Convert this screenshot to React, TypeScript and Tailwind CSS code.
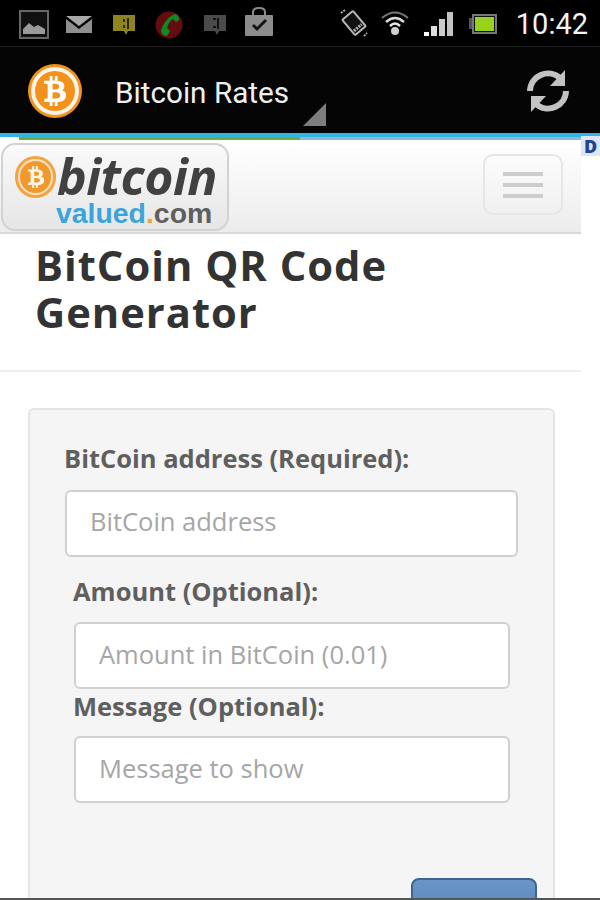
import { FaBtc } from "react-icons/fa";

function StatusIcons() {
    return (
        <div className="mt-[3px] flex items-center">
            {/* picture */}
            <svg width="32" height="32" viewBox="0 0 32 32" className="ml-[18px]">
                <rect x="2" y="2" width="28" height="27" fill="#111" stroke="#666" strokeWidth="2" />
                <path d="M5 25 L5 20 L11 14 L16 18 L20 16 L27 20 L27 25 Z" fill="#9a9a9a" />
            </svg>
            {/* mail */}
            <svg width="28" height="20" viewBox="0 0 28 20" className="ml-[15px]">
                <path d="M1 1 H27 L14 11 Z" fill="#a8a8a8" />
                <path d="M1 4 L14 14 L27 4 V18 H1 Z" fill="#8f8f8f" />
            </svg>
            {/* sms, yellow */}
            <svg width="24" height="22" viewBox="0 0 24 22" className="ml-[19px]">
                <path d="M1 1 H23 V17 H16 L14 21 L12 17 H1 Z" fill="#8f8520" />
                <path d="M12 5 v3 M12 11 v3 M16 4 v11" stroke="#2a2808" strokeWidth="2" />
            </svg>
            {/* missed call */}
            <svg width="28" height="28" viewBox="0 0 28 28" className="ml-[19px]">
                <circle cx="14" cy="14" r="13.5" fill="#640c10" />
                <path d="M20 3 C22 3 25 7 24 9 L21 11 L18 8 C15 10 13 13 12 17 L15 20 L12 25 C8 25 6 22 6 20 C8 12 13 6 20 3 Z" fill="#0d8a22" />
            </svg>
            {/* sms, grey */}
            <svg width="24" height="22" viewBox="0 0 24 22" className="ml-[20px]">
                <path d="M1 1 H23 V17 H16 L14 21 L12 17 H1 Z" fill="#4a4a4a" />
                <path d="M10 5 h3 M10 13 h3 M15 4 v11" stroke="#111" strokeWidth="2" />
            </svg>
            {/* market bag */}
            <svg width="30" height="30" viewBox="0 0 30 30" className="-mt-[6px] ml-[17px]">
                <path d="M9 9 V5 Q9 1 15 1 Q21 1 21 5 V9" fill="none" stroke="#8a8a8a" strokeWidth="2" />
                <rect x="1" y="8" width="28" height="21" rx="1" fill="#8c8c8c" />
                <path d="M9 18 L13 22 L22 13" fill="none" stroke="#151515" strokeWidth="3" />
            </svg>
        </div>
    );
}

function SystemIcons() {
    return (
        <div className="flex items-center">
            {/* rotate lock */}
            <svg width="28" height="28" viewBox="0 0 28 28">
                <g transform="rotate(-40 14 14)">
                    <rect x="7" y="4" width="14" height="20" rx="1" fill="#111" stroke="#b8b8b8" strokeWidth="2" />
                    <path d="M9 20 h10" stroke="#b8b8b8" strokeWidth="3" strokeDasharray="2 1" />
                </g>
                <path d="M1 4 L5 1 M24 27 L27 24" stroke="#a8a8a8" strokeWidth="2" strokeDasharray="2 1" />
            </svg>
            {/* wifi */}
            <svg width="28" height="26" viewBox="0 0 28 26" className="ml-[13px]">
                <path d="M1 8 Q14 -3 27 8" fill="none" stroke="#777" strokeWidth="2" />
                <path d="M5 12 Q14 4 23 12" fill="none" stroke="#d8d8d8" strokeWidth="2.5" />
                <path d="M9 16 Q14 11 19 16" fill="none" stroke="#e8e8e8" strokeWidth="2.5" />
                <circle cx="14" cy="21" r="4" fill="#d0d0d0" />
            </svg>
            {/* signal */}
            <div className="ml-[15px] mt-[2px] flex h-6 items-end gap-[2px]">
                <div className="h-[4px] w-[5px] bg-white" />
                <div className="h-[10px] w-[6px] bg-[#dddddd]" />
                <div className="h-[17px] w-[6px] bg-[#cccccc]" />
                <div className="h-6 w-[6px] bg-[#c4c4c4]" />
            </div>
            {/* battery */}
            <div className="ml-[16px] mt-[1px] flex items-center">
                <div className="h-[11px] w-[3px] bg-[#555555]" />
                <div className="flex h-[20px] w-[25px] items-center border-2 border-[#777777] bg-[#111111] p-[1px]">
                    <div className="h-full w-full bg-[#98d31c]" />
                </div>
            </div>
            <span className="ml-[19px] mt-[2px] font-['Roboto',sans-serif] text-[29px] leading-none text-[#f2f2f2]">10:42</span>
        </div>
    );
}

function RefreshIcon() {
    return (
        <svg width="42" height="44" viewBox="0 0 42 44" className="ml-auto mt-[2px]">
            <path d="M3 22 A18 18 0 0 1 33 9" fill="none" stroke="#c2c2c2" strokeWidth="6" />
            <path d="M38 1 V17 H23 Z" fill="#c2c2c2" />
            <path d="M39 22 A18 18 0 0 1 9 35" fill="none" stroke="#c2c2c2" strokeWidth="6" />
            <path d="M4 43 V27 H19 Z" fill="#c2c2c2" />
        </svg>
    );
}

function Logo() {
    return (
        <div className="flex h-[88px] w-[228px] flex-col rounded-[14px] border-2 border-[#d2d2d2] bg-gradient-to-b from-[#fafafa] to-[#e6e6e6] pl-[12px] pt-[10px]">
            <div className="flex items-center">
                <div className="flex h-[42px] w-[41px] items-center justify-center rounded-full bg-[#f3a33f] p-[3px]">
                    <div className="flex h-full w-full items-center justify-center rounded-full bg-[#fbe3c4] p-[2px]">
                        <div className="flex h-full w-full items-center justify-center rounded-full bg-[#f2992e]">
                            <FaBtc className="text-[22px] text-[#fff5e6]" />
                        </div>
                    </div>
                </div>
                <span className="ml-[1px] font-['Open_Sans',sans-serif] text-[50px] font-bold italic leading-[43px] tracking-[-0.5px] text-[#414141]">bitcoin</span>
            </div>
            <div className="ml-[41px] mt-[3px] font-['Liberation_Sans',sans-serif] text-[28.4px] font-bold leading-[24px]">
                <span className="text-[#3ba3dc]">valued</span>
                <span className="text-[#f2a13a]">.</span>
                <span className="text-[#5f5f5f]">com</span>
            </div>
        </div>
    );
}

function Field({ label, placeholder, labelClass, inputClass }: { label: string; placeholder: string; labelClass: string; inputClass: string }) {
    return (
        <div>
            <div className={`text-[25.5px] font-bold leading-[36px] text-[#5f5f5f] ${labelClass}`}>{label}</div>
            <div className={`flex items-center rounded-[6px] border-2 border-[#d0d0d0] bg-white pl-[23px] text-[25.5px] text-[#a6a6a6] ${inputClass}`}>
                {placeholder}
            </div>
        </div>
    );
}

export default function App() {
    return (
        <div className="flex h-[900px] w-[600px] flex-col overflow-hidden bg-white font-['Open_Sans',sans-serif]">
            <div className="flex h-[47px] shrink-0 items-center justify-between border-b border-[#1c1c1c] bg-black pr-[12px]">
                <StatusIcons />
                <SystemIcons />
            </div>
            <div className="flex h-[86px] shrink-0 items-center bg-[#050505] pl-[28px] pr-[31px]">
                <div className="mt-[2px] flex h-[54px] w-[54px] items-center justify-center rounded-full bg-[#f2921d] p-[3px]">
                    <div className="flex h-full w-full items-center justify-center rounded-full bg-[#fff4e6] p-[4px]">
                        <div className="flex h-full w-full items-center justify-center rounded-full bg-[#f2921d]">
                            <FaBtc className="text-[30px] text-white" />
                        </div>
                    </div>
                </div>
                <span className="ml-[33px] mt-[6px] font-['Roboto',sans-serif] text-[29.7px] text-[#f0f0f0]">Bitcoin Rates</span>
                <div className="ml-[14px] mt-[48px] h-0 w-0 self-center border-b-[23px] border-l-[23px] border-b-[#7d7d7d] border-l-transparent" />
                <RefreshIcon />
            </div>
            <div className="h-[4px] shrink-0 bg-[#33b5e5]" />
            <div className="flex h-[6px] shrink-0 items-start">
                <div className="h-full w-[19px] bg-white" />
                <div className="h-[3px] w-[281px] bg-[#6fae3c]" />
                <div className="h-[3px] flex-1 bg-[#8fb7de]" />
            </div>
            <div className="relative h-[91px] w-[581px] shrink-0 border-b-2 border-[#d8d8d8] bg-gradient-to-b from-white to-[#ececec] pl-[1px]">
                <div className="flex items-start justify-between pr-[18px]">
                    <Logo />
                    <div className="mt-[11px] flex h-[61px] w-[80px] flex-col items-center justify-center gap-[7px] rounded-[10px] border-2 border-[#e6e6e6]">
                        <div className="h-[4px] w-[40px] bg-[#cdcdcd]" />
                        <div className="h-[4px] w-[40px] bg-[#cdcdcd]" />
                        <div className="h-[4px] w-[40px] bg-[#cdcdcd]" />
                    </div>
                </div>
                <div className="absolute right-[-19px] top-[-7px] flex h-[20px] w-[19px] items-center justify-center bg-[#dfe6f2] text-[18px] font-extrabold leading-none text-[#1f4596]">
                    D
                </div>
            </div>
            <h1 className="ml-[35px] mt-[7px] w-[520px] text-[41.7px] font-bold leading-[47px] tracking-[1px] text-[#333333]">
                BitCoin QR Code Generator
            </h1>
            <div className="mt-[35px] h-[2px] w-[581px] shrink-0 bg-[#eeeeee]" />
            <div className="min-h-0 flex-1 overflow-hidden">
                <div className="ml-[28px] mt-[36px] h-[600px] w-[527px] rounded-[6px] border-2 border-[#e5e5e5] bg-[#f5f5f5] pl-[35px] pt-[30px]">
                    <Field
                        label="BitCoin address (Required):"
                        placeholder="BitCoin address"
                        labelClass="-ml-[1px]"
                        inputClass="mt-[14px] h-[67px] w-[453px] pb-[4px]"
                    />
                    <div className="mt-[16px]">
                        <Field
                            label="Amount (Optional):"
                            placeholder="Amount in BitCoin (0.01)"
                            labelClass="ml-[8px]"
                            inputClass="ml-[9px] mt-[13px] h-[67px] w-[436px] pb-[2px]"
                        />
                    </div>
                    <Field
                        label="Message (Optional):"
                        placeholder="Message to show"
                        labelClass="-mt-[1px] ml-[8px]"
                        inputClass="ml-[9px] mt-[12px] h-[67px] w-[436px] pb-[2px]"
                    />
                    <div className="ml-[346px] mt-[75px] h-[60px] w-[126px] rounded-[8px] border-2 border-[#3d6592] bg-gradient-to-b from-[#6a96c6] to-[#4f7fb5]" />
                </div>
            </div>
            <div className="h-[2px] shrink-0 bg-[#555555]" />
        </div>
    );
}
